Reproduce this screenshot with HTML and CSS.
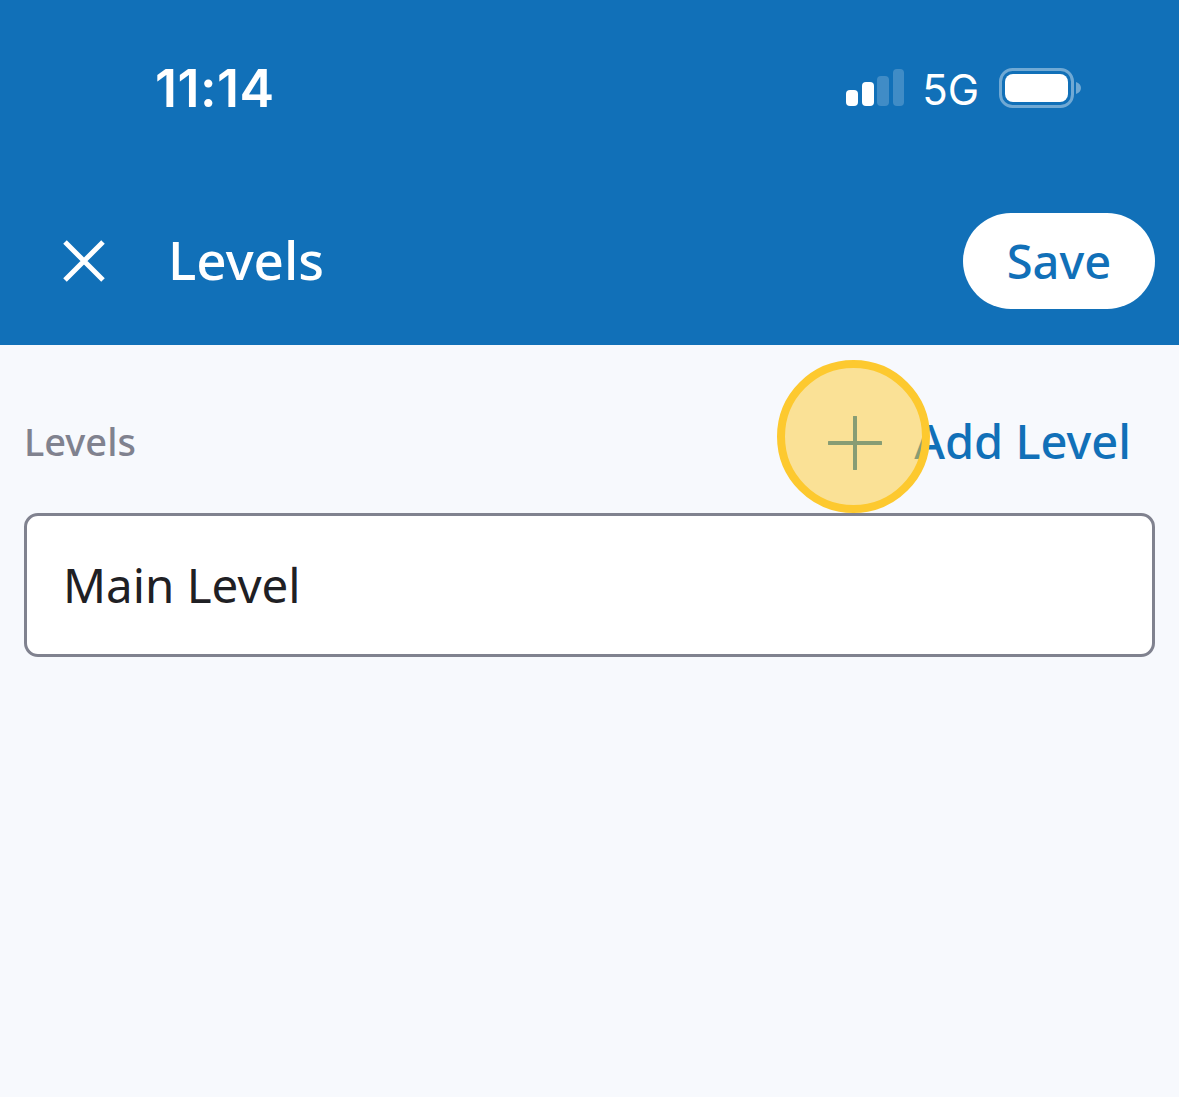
FILE: index.html
```html
<html>
<head>
<title>Levels</title>
<meta charset="UTF-8"/>
<link rel="stylesheet" href="styles.css">
</head>
<body>
	<div class="header">
		<div class="statusBar">
			<div class="time">11:14</div>
			<div class="statusIcons">
				<svg class="signal" width="58" height="38" viewBox="0 0 58 38">
					<rect x="0" y="21" width="12" height="16" rx="4" fill="#fff"/>
					<rect x="16" y="13" width="12" height="24" rx="4" fill="#fff"/>
					<rect x="31" y="7" width="12" height="30" rx="4" fill="#fff" fill-opacity="0.2"/>
					<rect x="47" y="0" width="11" height="37" rx="4" fill="#fff" fill-opacity="0.2"/>
				</svg>
				<span class="network">5G</span>
				<svg class="battery" width="82" height="40" viewBox="0 0 82 40">
					<rect x="1.5" y="1.5" width="72" height="37" rx="12" fill="none" stroke="#fff" stroke-opacity="0.4" stroke-width="3"/>
					<rect x="6" y="6" width="63" height="28" rx="8" fill="#fff"/>
					<path d="M77 14c3 1 5 3 5 6s-2 5-5 6z" fill="#fff" fill-opacity="0.4"/>
				</svg>
			</div>
		</div>
		<div class="toolbar">
			<svg class="close" width="44" height="44" viewBox="0 0 44 44">
				<path d="M3 3L41 41M41 3L3 41" stroke="#fff" stroke-width="5" fill="none"/>
			</svg>
			<div class="title">Levels</div>
			<div class="saveBtn">Save</div>
		</div>
	</div>
	<div class="content">
		<div class="levelsRow">
			<div class="levelsLabel">Levels</div>
			<div class="addLevel">
				<svg class="plus" width="54" height="54" viewBox="0 0 54 54">
					<path d="M27 1V53M1 27H53" stroke="#1170b8" stroke-width="4" stroke-linecap="round" fill="none"/>
				</svg>
				<span>Add Level</span>
			</div>
		</div>
		<div class="levelInput">Main Level</div>
	</div>
	<div class="highlight"></div>
</body>
</html>
```
FILE: styles.css
```css
html, body
{
	margin: 0;
	padding: 0;
}

body
{
	width: 1179px;
	height: 1097px;
	overflow: hidden;
	position: relative;
	background-color: #f7f9fd;
	font-family: "Noto Sans", sans-serif;
}

.header
{
	height: 345px;
	background-color: #1170b8;
	color: #fff;
	display: flex;
	flex-direction: column;
}

.statusBar
{
	height: 213px;
	box-sizing: border-box;
	padding: 60px 98px 0 155px;
	display: flex;
	justify-content: space-between;
	align-items: flex-start;
}

.time
{
	margin-top: 1px;
	font-family: Inter, sans-serif;
	font-size: 52px;
	font-weight: 600;
	line-height: 56px;
	letter-spacing: 0.5px;
}

.statusIcons
{
	display: flex;
	align-items: center;
	padding-top: 6px;
}

.network
{
	font-family: Inter, sans-serif;
	font-size: 42px;
	line-height: 40px;
	margin: 4px 20px 0 18px;
}

.toolbar
{
	height: 96px;
	padding: 0 24px 0 62px;
	display: flex;
	align-items: center;
}

.title
{
	margin-left: 62px;
	margin-top: -3px;
	font-size: 53px;
	font-weight: 500;
	flex-grow: 1;
}

.saveBtn
{
	width: 192px;
	height: 96px;
	line-height: 96px;
	border-radius: 48px;
	background-color: #fff;
	color: #1170b8;
	text-align: center;
	font-size: 47px;
	font-weight: 500;
}

.content
{
	padding: 0 24px;
}

.levelsRow
{
	height: 168px;
	padding-right: 24px;
	display: flex;
	justify-content: space-between;
	align-items: center;
	padding-top: 24px;
	box-sizing: border-box;
}

.levelsLabel
{
	font-size: 38px;
	font-weight: 500;
	color: #80828f;
}

.addLevel
{
	display: flex;
	align-items: center;
	gap: 32px;
	font-size: 47px;
	font-weight: 500;
	color: #1170b8;
}

.plus
{
	margin-top: 4px;
}

.levelInput
{
	height: 144px;
	box-sizing: border-box;
	border: 3px solid #80828f;
	border-radius: 14px;
	background-color: #fff;
	padding-left: 36px;
	line-height: 138px;
	font-size: 47.5px;
	color: #1f2024;
}

.highlight
{
	position: absolute;
	left: 777px;
	top: 360px;
	width: 153px;
	height: 153px;
	box-sizing: border-box;
	border: 8px solid #fdc92f;
	border-radius: 50%;
	background-color: rgba(253,201,47,0.5);
}
```
